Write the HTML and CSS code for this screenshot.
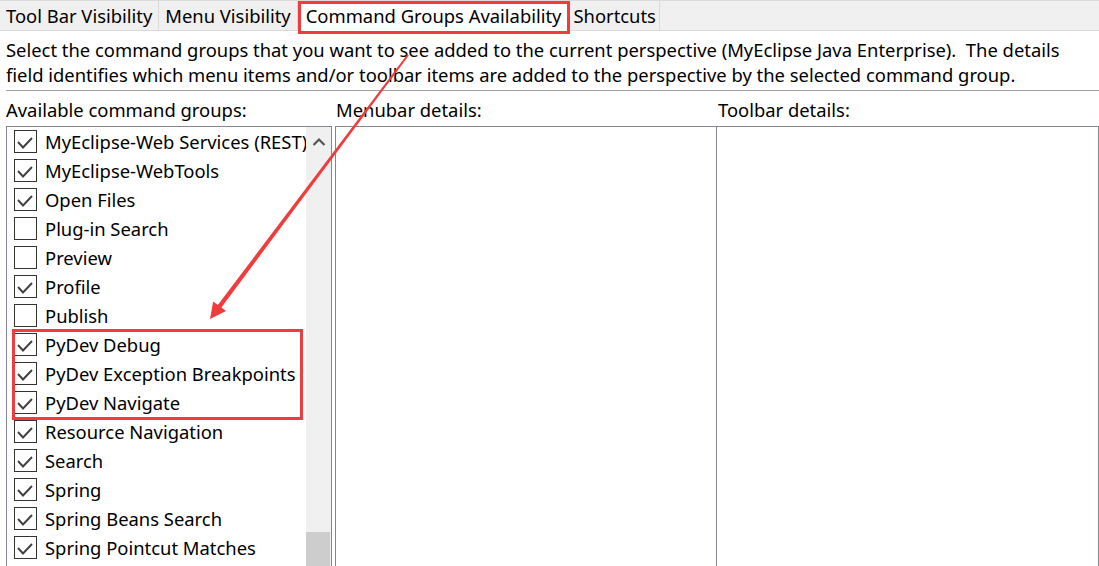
FILE: index.html
```html
<!doctype html>
<html>
    <head>
        <link rel="stylesheet" href="styles.css">
    </head>
    <body>

        <div class="tabs">
            <div class="tab">Tool Bar Visibility</div>
            <div class="tab">Menu Visibility</div>
            <div class="tab active">Command Groups Availability</div>
            <div class="tab">Shortcuts</div>
        </div>

        <div class="page">
            <p class="intro">Select the command groups that you want to see added to the current perspective (MyEclipse Java Enterprise).&nbsp; The details field identifies which menu items and/or toolbar items are added to the perspective by the selected command group.</p>
            <div class="sep"></div>

            <div class="columns">
                <div class="col groups">
                    <div class="label">Available command groups:</div>
                    <div class="box list">
                        <div class="items">
                            <div class="row"><span class="check on"></span>MyEclipse-Web Services (REST)</div>
                            <div class="row"><span class="check on"></span>MyEclipse-WebTools</div>
                            <div class="row"><span class="check on"></span>Open Files</div>
                            <div class="row"><span class="check"></span>Plug-in Search</div>
                            <div class="row"><span class="check"></span>Preview</div>
                            <div class="row"><span class="check on"></span>Profile</div>
                            <div class="row"><span class="check"></span>Publish</div>
                            <div class="row"><span class="check on"></span>PyDev Debug</div>
                            <div class="row"><span class="check on"></span>PyDev Exception Breakpoints</div>
                            <div class="row"><span class="check on"></span>PyDev Navigate</div>
                            <div class="row"><span class="check on"></span>Resource Navigation</div>
                            <div class="row"><span class="check on"></span>Search</div>
                            <div class="row"><span class="check on"></span>Spring</div>
                            <div class="row"><span class="check on"></span>Spring Beans Search</div>
                            <div class="row"><span class="check on"></span>Spring Pointcut Matches</div>
                        </div>
                        <div class="scrollbar">
                            <svg class="arrow-up" width="25" height="30" viewBox="0 0 25 30">
                                <polyline points="7.5,18 13,12.5 18.5,18" fill="none" stroke="#555" stroke-width="2.2"/>
                            </svg>
                            <div class="thumb"></div>
                        </div>
                    </div>
                </div>
                <div class="col">
                    <div class="label">Menubar details:</div>
                    <div class="box"></div>
                </div>
                <div class="col">
                    <div class="label">Toolbar details:</div>
                    <div class="box"></div>
                </div>
            </div>
        </div>

        <!-- red annotations drawn over the screenshot -->
        <div class="mark mark-tab"></div>
        <div class="mark mark-pydev"></div>
        <svg class="pointer" width="1099" height="566" viewBox="0 0 1099 566">
            <polygon fill="#f03c3c" points="407.2,54.4 408.8,55.6 221.4,307.5 226,311 210,319 213.2,301.4 217.8,304.9"/>
        </svg>

    </body>
</html>
```

FILE: styles.css
```css
html, body {
    margin: 0;
    height: 100%;
    overflow: hidden;
}
body {
    font-family: "Noto Sans", "Liberation Sans", sans-serif;
    font-size: 18.4px;
    color: #000;
    background: #fff;
    position: relative;
}
.tabs {
    display: flex;
    background: #f0f0f0;
    border-top: 1px solid #dadada;
    border-bottom: 1px solid #dadada;
    box-sizing: border-box;
    height: 31px;
}
.tab {
    padding: 0 6px;
    line-height: 29px;
    border-right: 1px solid #dadada;
    white-space: nowrap;
}
.tab.active {
    background: #fff;
    padding: 0 6px 0 8px;
    margin-bottom: -1px;
}
.tab:last-child {
    padding: 0 3px 0 5px;
}
.page {
    padding: 0 0 0 6px;
}
.intro {
    margin: 6px 0 0 0;
    line-height: 25px;
    padding-right: 20px;
}
.sep {
    margin-top: 3px;
    border-top: 1px solid #a0a0a0;
}
.columns {
    display: grid;
    grid-template-columns: 329px 382px 382px;
}
.col.groups {
    width: 326px;
}
.label {
    line-height: 25px;
    margin-top: 6px;
    height: 29px;
    white-space: nowrap;
}
.col + .col .label {
    padding-left: 1px;
}
.box {
    border: 1px solid #828790;
    height: 445px;
    box-sizing: border-box;
}
.col + .col + .col .box {
    border-left: none;
}
.list {
    display: flex;
    overflow: hidden;
}
.items {
    flex: 1;
    overflow: hidden;
}
.row {
    display: flex;
    align-items: center;
    height: 29px;
    padding-left: 7px;
    white-space: nowrap;
}
.check {
    flex: none;
    width: 23px;
    height: 23px;
    box-sizing: border-box;
    border: 1px solid #333;
    margin-right: 8px;
    background: #fff;
}
.check.on {
    background: url("data:image/svg+xml;utf8,<svg xmlns='http://www.w3.org/2000/svg' width='21' height='21'><polyline points='3,11 8,16.5 17,7' fill='none' stroke='%23404040' stroke-width='1.9'/></svg>") no-repeat;
}
.scrollbar {
    flex: none;
    width: 25px;
    background: #f0f0f0;
    display: flex;
    flex-direction: column;
}
.arrow-up {
    display: block;
}
.thumb {
    margin-top: auto;
    height: 38px;
    background: #cdcdcd;
    margin-right: 1px;
}
.mark {
    position: absolute;
    border: 3px solid #f03c3c;
    box-sizing: border-box;
}
.mark-tab {
    left: 298px;
    top: 1px;
    width: 272px;
    height: 33px;
}
.mark-pydev {
    left: 12px;
    top: 329px;
    width: 291px;
    height: 91px;
}
.pointer {
    position: absolute;
    left: 0;
    top: 0;
}
```
